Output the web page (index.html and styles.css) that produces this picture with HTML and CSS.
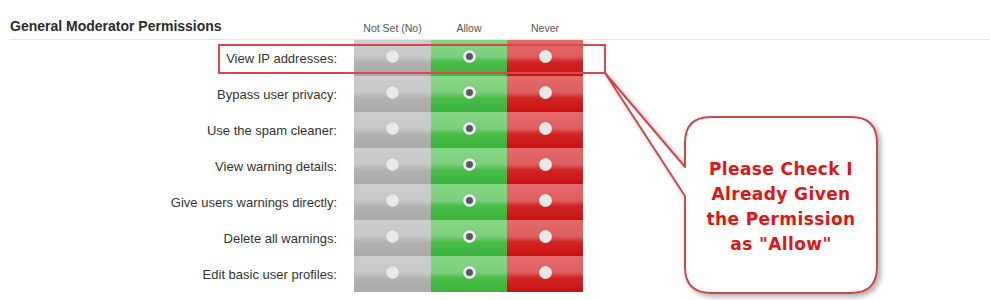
FILE: index.html
```html
<!DOCTYPE html>
<html>
<head>
<meta charset="utf-8">
<link rel="stylesheet" href="styles.css">
</head>
<body>
<div class="page">
  <div class="head">
    <h2 class="title">General Moderator Permissions</h2>
    <div class="colhead">Not Set (No)</div>
    <div class="colhead">Allow</div>
    <div class="colhead">Never</div>
  </div>
  <div class="rows">
    <div class="row"><div class="label">View IP addresses:</div><div class="cell unset"><span class="radio"></span></div><div class="cell allow"><span class="radio on"></span></div><div class="cell never"><span class="radio"></span></div></div>
    <div class="row"><div class="label">Bypass user privacy:</div><div class="cell unset"><span class="radio"></span></div><div class="cell allow"><span class="radio on"></span></div><div class="cell never"><span class="radio"></span></div></div>
    <div class="row"><div class="label">Use the spam cleaner:</div><div class="cell unset"><span class="radio"></span></div><div class="cell allow"><span class="radio on"></span></div><div class="cell never"><span class="radio"></span></div></div>
    <div class="row"><div class="label">View warning details:</div><div class="cell unset"><span class="radio"></span></div><div class="cell allow"><span class="radio on"></span></div><div class="cell never"><span class="radio"></span></div></div>
    <div class="row"><div class="label">Give users warnings directly:</div><div class="cell unset"><span class="radio"></span></div><div class="cell allow"><span class="radio on"></span></div><div class="cell never"><span class="radio"></span></div></div>
    <div class="row"><div class="label">Delete all warnings:</div><div class="cell unset"><span class="radio"></span></div><div class="cell allow"><span class="radio on"></span></div><div class="cell never"><span class="radio"></span></div></div>
    <div class="row"><div class="label">Edit basic user profiles:</div><div class="cell unset"><span class="radio"></span></div><div class="cell allow"><span class="radio on"></span></div><div class="cell never"><span class="radio"></span></div></div>
  </div>

  <svg class="annot" width="990" height="300" viewBox="0 0 990 300">
    <defs>
      <filter id="sh" x="-10%" y="-10%" width="130%" height="130%">
        <feDropShadow dx="3" dy="3" stdDeviation="2.5" flood-color="#000" flood-opacity="0.3"/>
      </filter>
    </defs>
    <rect x="219" y="45" width="386" height="28" fill="none" stroke="#d9484b" stroke-width="2"/>
    <path d="M605 73 L685 167 L685 143 Q685 117 711 117 L851 117 Q877 117 877 143 L877 267 Q877 293 851 293 L711 293 Q685 293 685 267 L685 196 Z"
          fill="#ffffff" stroke="#d0474a" stroke-width="2" stroke-linejoin="round" filter="url(#sh)"/>
  </svg>
  <div class="callout">Please Check I<br>Already Given<br>the Permission<br>as "Allow"</div>
</div>
</body>
</html>
```

FILE: styles.css
```css
html, body {
  margin: 0;
  padding: 0;
  background: #ffffff;
}
body {
  font-family: "Liberation Sans", Arial, sans-serif;
  color: #333;
}
.page {
  position: relative;
  width: 990px;
  height: 300px;
  overflow: hidden;
}
.head {
  display: grid;
  grid-template-columns: 344px 77px 76px 76px;
  align-items: end;
  height: 40px;
  box-sizing: border-box;
  margin-left: 10px;
  padding-bottom: 5px;
  border-bottom: 1px solid #e6e9ec;
}
.title {
  margin: 0;
  font-size: 14px;
  line-height: 16px;
  font-weight: bold;
  color: #2b2b2b;
}
.colhead {
  font-size: 10.5px;
  line-height: 14px;
  text-align: center;
  color: #555;
  margin-bottom: -1px;
}
.rows {
  display: flex;
  flex-direction: column;
}
.row {
  display: grid;
  grid-template-columns: 354px 77px 76px 76px;
  height: 36px;
}
.label {
  display: flex;
  align-items: center;
  justify-content: flex-end;
  padding-right: 17px;
  font-size: 13px;
  color: #333;
}
.cell {
  display: flex;
  align-items: center;
  justify-content: center;
  padding-bottom: 4px;
  box-sizing: border-box;
}
.unset {
  background: linear-gradient(to bottom, #cdcdcd 0%, #c8c8c8 45%, #b2b2b2 62%, #a9a9a9 100%);
}
.allow {
  background: linear-gradient(to bottom, #86d686 0%, #7ccf7c 45%, #48bc48 62%, #3bb43b 100%);
}
.never {
  background: linear-gradient(to bottom, #e46a6a 0%, #de5f5f 45%, #d02424 62%, #c91010 100%);
}
.radio {
  width: 13px;
  height: 13px;
  border-radius: 50%;
  background: #e8e8e8;
  box-shadow: 0 0 1px rgba(0,0,0,0.25);
  box-sizing: border-box;
}
.radio.on {
  background: #555a60;
  border: 3.5px solid #ececec;
}
.annot {
  position: absolute;
  left: 0;
  top: 0;
  pointer-events: none;
}
.callout {
  position: absolute;
  left: 685px;
  top: 119px;
  width: 192px;
  height: 176px;
  display: flex;
  align-items: center;
  justify-content: center;
  text-align: center;
  font-family: "DejaVu Sans", Verdana, sans-serif;
  font-weight: bold;
  font-size: 17px;
  letter-spacing: 0.4px;
  line-height: 25px;
  color: #e01616;
}
```
